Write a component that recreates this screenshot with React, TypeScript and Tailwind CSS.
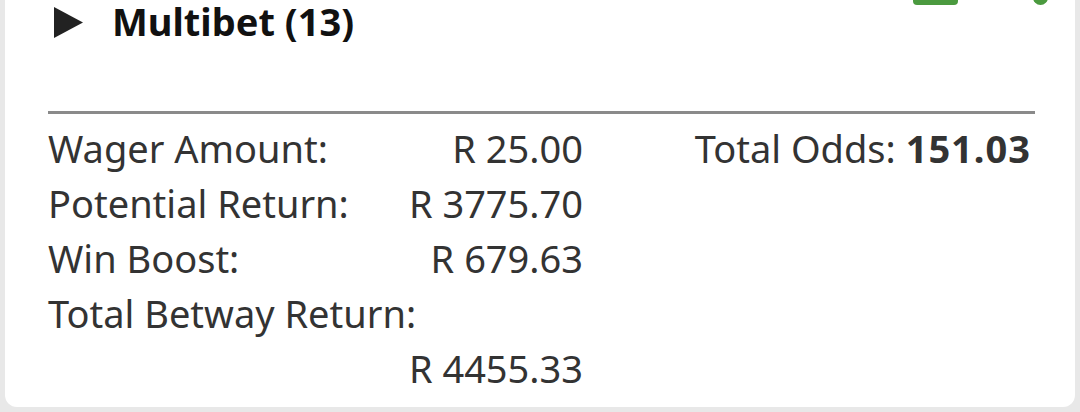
export default function App() {
  return (
    <div className="h-[412px] w-[1080px] overflow-hidden bg-[#e8e8e8] px-[5px] font-['Noto_Sans',sans-serif]">
      <div className="relative h-[407px] rounded-b-[12px] bg-white">
        {/* cut-off status items at the top edge */}
        <div className="absolute left-[908px] top-0 h-[5px] w-[45px] rounded-b-[4px] bg-[#4b9a3f]" />
        <div className="absolute left-[1028px] top-[-10px] h-[15px] w-[15px] rounded-full bg-[#4b9a3f]" />

        <div className="flex h-[111px] items-start pl-[49px]">
          <svg width="29" height="31" viewBox="0 0 29 31" className="mt-[7px]">
            <polygon points="0,0 29,15.5 0,31" fill="#222" />
          </svg>
          <h2 className="ml-[29px] text-[38px] font-bold leading-[42px] text-[#111]">
            Multibet (13)
          </h2>
        </div>

        <div className="ml-[43px] mr-[40px] h-[3px] bg-[#8a8a8a]" />

        <div className="mt-[7px] flex pl-[43px] pr-[44px] text-[38px] leading-[55px] text-[#333]">
          <div className="w-[535px]">
            <div className="flex justify-between">
              <span>Wager Amount:</span>
              <span>R 25.00</span>
            </div>
            <div className="flex justify-between">
              <span>Potential Return:</span>
              <span>R 3775.70</span>
            </div>
            <div className="flex justify-between">
              <span>Win Boost:</span>
              <span>R 679.63</span>
            </div>
            <div>Total Betway Return:</div>
            <div className="text-right">R 4455.33</div>
          </div>
          <div className="flex-1 text-right">
            Total Odds: <span className="font-bold tracking-[1px]">151.03</span>
          </div>
        </div>
      </div>
    </div>
  );
}
